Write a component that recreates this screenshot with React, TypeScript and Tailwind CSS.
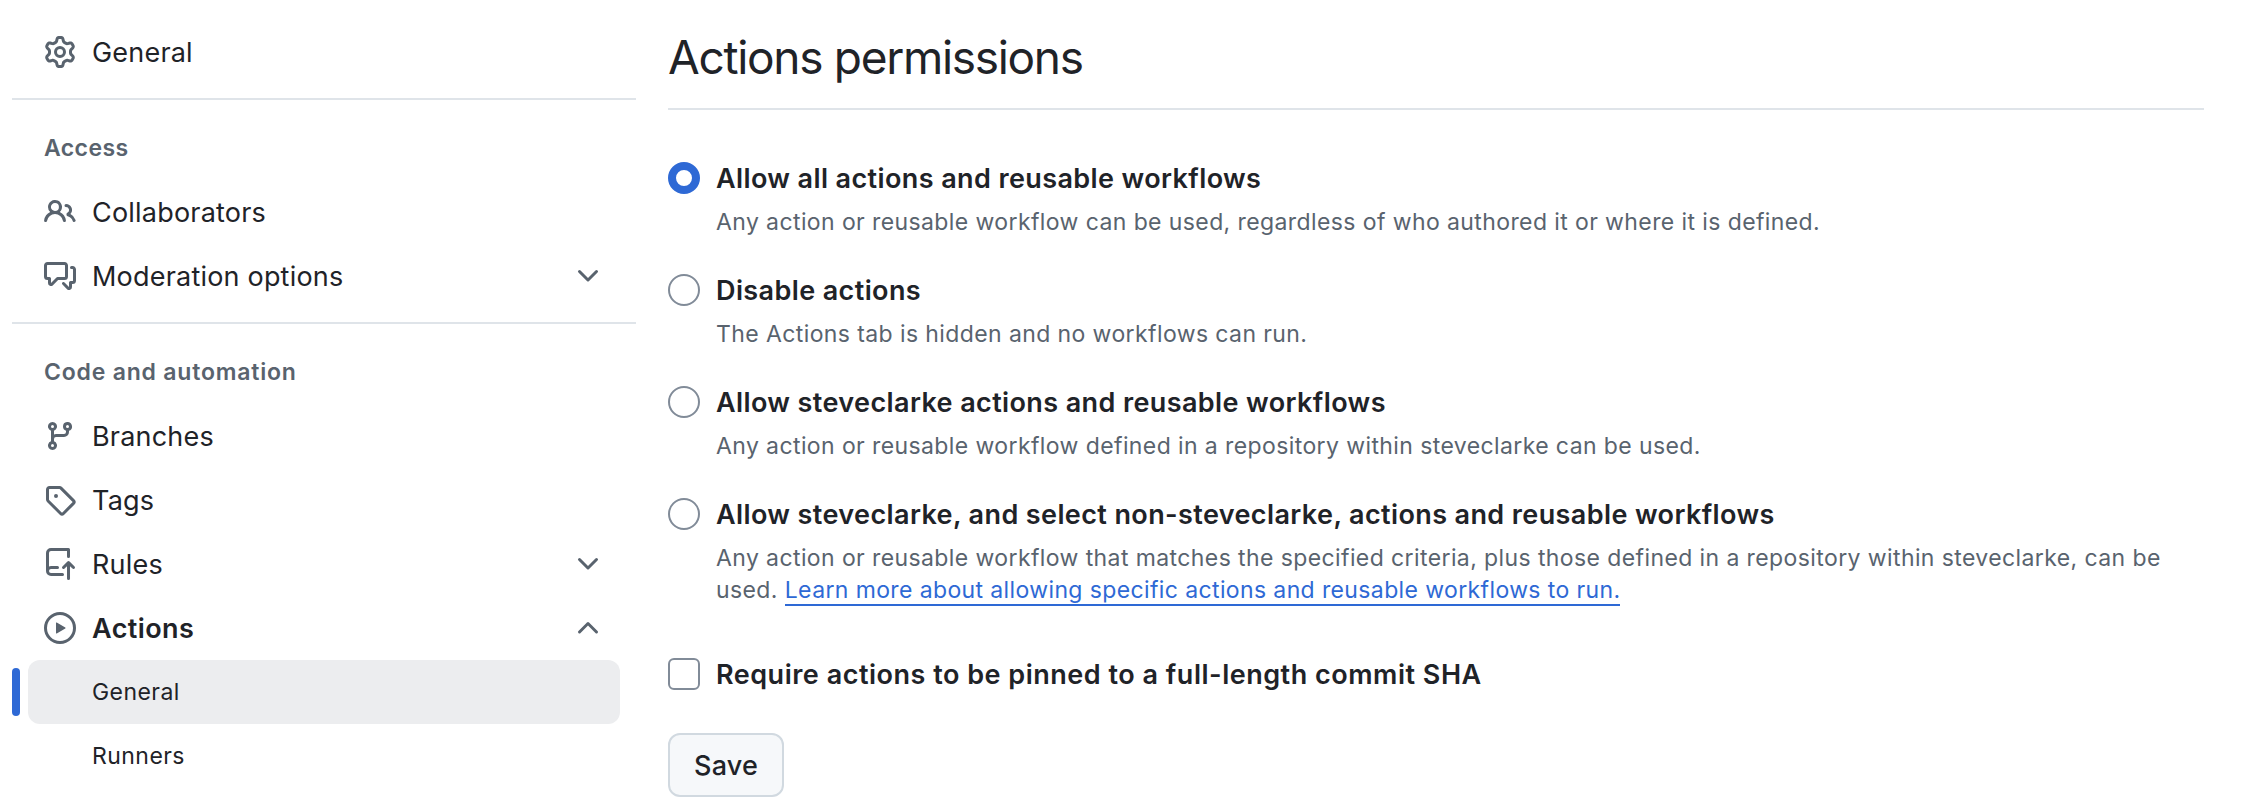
import { useState } from "react";

const icons = {
  gear: "M8 0a8.2 8.2 0 0 1 .701.031C9.444.095 9.99.645 10.16 1.29l.288 1.107c.018.066.079.158.212.224.231.114.454.243.668.386.123.082.233.09.299.071l1.103-.303c.644-.176 1.392.021 1.82.63.27.385.506.792.704 1.218.315.675.111 1.422-.364 1.891l-.814.806c-.049.048-.098.147-.088.294.016.257.016.515 0 .772-.01.147.038.246.088.294l.814.806c.475.469.679 1.216.364 1.891a7.977 7.977 0 0 1-.704 1.217c-.428.61-1.176.807-1.82.63l-1.102-.302c-.067-.019-.177-.011-.3.071a5.909 5.909 0 0 1-.668.386c-.133.066-.194.158-.211.224l-.29 1.106c-.168.646-.715 1.196-1.458 1.26a8.006 8.006 0 0 1-1.402 0c-.743-.064-1.289-.614-1.458-1.26l-.289-1.106c-.018-.066-.079-.158-.212-.224a5.738 5.738 0 0 1-.668-.386c-.123-.082-.233-.09-.299-.071l-1.103.303c-.644.176-1.392-.021-1.82-.63a8.12 8.12 0 0 1-.704-1.218c-.315-.675-.111-1.422.363-1.891l.815-.806c.05-.048.098-.147.088-.294a6.214 6.214 0 0 1 0-.772c.01-.147-.038-.246-.088-.294l-.815-.806C.635 6.045.431 5.298.746 4.623a7.92 7.92 0 0 1 .704-1.217c.428-.61 1.176-.807 1.82-.63l1.102.302c.067.019.177.011.3-.071.214-.143.437-.272.668-.386.133-.066.194-.158.211-.224l.29-1.106C6.009.645 6.556.095 7.299.03 7.53.01 7.764 0 8 0Zm-.571 1.525c-.036.003-.108.036-.137.146l-.289 1.105c-.147.561-.549.967-.998 1.189-.173.086-.34.183-.5.29-.417.278-.97.423-1.529.27l-1.103-.303c-.109-.03-.175.016-.195.045-.22.312-.412.644-.573.99-.014.031-.021.11.059.19l.815.806c.411.406.562.957.53 1.456a4.709 4.709 0 0 0 0 .582c.032.499-.119 1.05-.53 1.456l-.815.806c-.081.08-.073.159-.059.19.162.346.353.677.573.989.02.03.085.076.195.046l1.102-.303c.56-.153 1.113-.008 1.53.27.161.107.328.204.501.29.447.222.85.629.997 1.189l.289 1.105c.029.109.101.143.137.146a6.6 6.6 0 0 0 1.142 0c.036-.003.108-.036.137-.146l.289-1.105c.147-.561.549-.967.998-1.189.173-.086.34-.183.5-.29.417-.278.97-.423 1.529-.27l1.103.303c.109.029.175-.016.195-.045.22-.313.411-.644.573-.99.014-.031.021-.11-.059-.19l-.815-.806c-.411-.406-.562-.957-.53-1.456a4.709 4.709 0 0 0 0-.582c-.032-.499.119-1.05.53-1.456l.815-.806c.081-.08.073-.159.059-.19a6.464 6.464 0 0 0-.573-.989c-.02-.03-.085-.076-.195-.046l-1.102.303c-.56.153-1.113.008-1.53-.27a4.44 4.44 0 0 0-.501-.29c-.447-.222-.85-.629-.997-1.189l-.289-1.105c-.029-.11-.101-.143-.137-.146a6.6 6.6 0 0 0-1.142 0ZM11 8a3 3 0 1 1-6 0 3 3 0 0 1 6 0ZM9.5 8a1.5 1.5 0 1 0-3.001.001A1.5 1.5 0 0 0 9.5 8Z",
  people: "M2 5.5a3.5 3.5 0 1 1 5.898 2.549 5.508 5.508 0 0 1 3.034 4.084.75.75 0 1 1-1.482.235 4 4 0 0 0-7.9 0 .75.75 0 0 1-1.482-.236A5.507 5.507 0 0 1 3.102 8.05 3.493 3.493 0 0 1 2 5.5ZM11 4a3.001 3.001 0 0 1 2.22 5.018 5.01 5.01 0 0 1 2.56 3.012.749.749 0 0 1-.885.954.752.752 0 0 1-.549-.514 3.507 3.507 0 0 0-2.522-2.372.75.75 0 0 1-.574-.73v-.352a.75.75 0 0 1 .416-.672A1.5 1.5 0 0 0 11 5.5.75.75 0 0 1 11 4Zm-5.5-.5a2 2 0 1 0-.001 3.999A2 2 0 0 0 5.5 3.5Z",
  discussion: "M1.75 1h8.5c.966 0 1.75.784 1.75 1.75v5.5A1.75 1.75 0 0 1 10.25 10H7.061l-2.574 2.573A1.458 1.458 0 0 1 2 11.543V10h-.25A1.75 1.75 0 0 1 0 8.25v-5.5C0 1.784.784 1 1.75 1ZM1.5 2.75v5.5c0 .138.112.25.25.25h1a.75.75 0 0 1 .75.75v2.19l2.72-2.72a.749.749 0 0 1 .53-.22h3.5a.25.25 0 0 0 .25-.25v-5.5a.25.25 0 0 0-.25-.25h-8.5a.25.25 0 0 0-.25.25Zm13 2a.25.25 0 0 0-.25-.25h-.5a.75.75 0 0 1 0-1.5h.5c.966 0 1.75.784 1.75 1.75v5.5A1.75 1.75 0 0 1 14.25 12H14v1.543a1.458 1.458 0 0 1-2.487 1.03L9.22 12.28a.749.749 0 0 1 .326-1.275.749.749 0 0 1 .734.215l2.22 2.22v-2.19a.75.75 0 0 1 .75-.75h1a.25.25 0 0 0 .25-.25Z",
  branch: "M9.5 3.25a2.25 2.25 0 1 1 3 2.122V6A2.5 2.5 0 0 1 10 8.5H6a1 1 0 0 0-1 1v1.128a2.251 2.251 0 1 1-1.5 0V5.372a2.25 2.25 0 1 1 1.5 0v1.836A2.493 2.493 0 0 1 6 7h4a1 1 0 0 0 1-1v-.628A2.25 2.25 0 0 1 9.5 3.25Zm-6 0a.75.75 0 1 0 1.5 0 .75.75 0 0 0-1.5 0Zm8.25-.75a.75.75 0 1 0 0 1.5.75.75 0 0 0 0-1.5ZM4.25 12a.75.75 0 1 0 0 1.5.75.75 0 0 0 0-1.5Z",
  tag: "M1 7.775V2.75C1 1.784 1.784 1 2.75 1h5.025c.464 0 .91.184 1.238.513l6.25 6.25a1.75 1.75 0 0 1 0 2.474l-5.026 5.026a1.75 1.75 0 0 1-2.474 0l-6.25-6.25A1.752 1.752 0 0 1 1 7.775Zm1.5 0c0 .066.026.13.073.177l6.25 6.25a.25.25 0 0 0 .354 0l5.025-5.025a.25.25 0 0 0 0-.354l-6.25-6.25a.25.25 0 0 0-.177-.073H2.75a.25.25 0 0 0-.25.25ZM6 5a1 1 0 1 1 0 2 1 1 0 0 1 0-2Z",
  rules: "M1 2.5A2.5 2.5 0 0 1 3.5 0h8.75a.75.75 0 0 1 .75.75v3.5a.75.75 0 0 1-1.5 0V1.5h-8a1 1 0 0 0-1 1v6.708A2.493 2.493 0 0 1 3.5 9h3.25a.75.75 0 0 1 0 1.5H3.5a1 1 0 0 0 0 2h5.75a.75.75 0 0 1 0 1.5H3.5A2.5 2.5 0 0 1 1 11.5Zm13.23 7.79h-.001l-1.224-1.224v6.184a.75.75 0 0 1-1.5 0V9.066L10.28 10.29a.75.75 0 0 1-1.06-1.061l2.505-2.504a.75.75 0 0 1 1.06 0L15.29 9.23a.751.751 0 0 1-.018 1.042.751.751 0 0 1-1.042.018Z",
  play: "M8 0a8 8 0 1 1 0 16A8 8 0 0 1 8 0ZM1.5 8a6.5 6.5 0 1 0 13 0 6.5 6.5 0 0 0-13 0Zm4.879-2.773 4.264 2.559a.25.25 0 0 1 0 .428l-4.264 2.559A.25.25 0 0 1 6 10.559V5.442a.25.25 0 0 1 .379-.215Z",
  down: "M12.78 5.22a.749.749 0 0 1 0 1.06l-4.25 4.25a.749.749 0 0 1-1.06 0L3.22 6.28a.749.749 0 1 1 1.06-1.06L8 8.939l3.72-3.719a.749.749 0 0 1 1.06 0Z",
  up: "M3.22 10.53a.749.749 0 0 1 0-1.06l4.25-4.25a.749.749 0 0 1 1.06 0l4.25 4.25a.749.749 0 1 1-1.06 1.06L8 6.811 4.28 10.53a.749.749 0 0 1-1.06 0Z",
};

function Icon({ name }: { name: keyof typeof icons }) {
  return (
    <svg viewBox="0 0 16 16" className="size-8 shrink-0 fill-[#59636e]" aria-hidden="true">
      <path d={icons[name]} />
    </svg>
  );
}

interface NavRowProps {
  icon: keyof typeof icons;
  label: string;
  chevron?: "up" | "down";
  active?: boolean;
}

function NavRow({ icon, label, chevron, active }: NavRowProps) {
  return (
    <a href="#" className="mx-4 flex h-16 items-center gap-4 px-4">
      <Icon name={icon} />
      <span
        className={
          active
            ? "grow pt-px text-[27px] leading-[39px] font-semibold tracking-[0.4px]"
            : "grow pt-px text-[27px] leading-[39px] tracking-[0.2px]"
        }
      >
        {label}
      </span>
      {chevron && <Icon name={chevron} />}
    </a>
  );
}

function Divider() {
  return <hr className="mt-3.5 mb-4 border-t-2 border-[#dfe4e9]" />;
}

function Sidebar() {
  return (
    <nav className="flex w-[624px] shrink-0 flex-col whitespace-nowrap pt-5">
      <NavRow icon="gear" label="General" />
      <Divider />
      <h2 className="flex h-16 items-center px-8 text-[23px] font-semibold tracking-[0.4px] text-[#59636e]">Access</h2>
      <NavRow icon="people" label="Collaborators" />
      <NavRow icon="discussion" label="Moderation options" chevron="down" />
      <Divider />
      <h2 className="flex h-16 items-center px-8 text-[23px] font-semibold tracking-[0.8px] text-[#59636e]">
        Code and automation
      </h2>
      <NavRow icon="branch" label="Branches" />
      <NavRow icon="tag" label="Tags" />
      <NavRow icon="rules" label="Rules" chevron="down" />
      <NavRow icon="play" label="Actions" chevron="up" active />
      <div className="flex items-center gap-2 pr-4">
        <span className="h-12 w-2 rounded-full bg-[#2e69d5]" />
        <a href="#" className="flex h-16 grow items-center rounded-xl bg-[#ecedef] pl-16 text-[23px] tracking-[0.45px]">
          General
        </a>
      </div>
      <a href="#" className="flex h-16 items-center pl-20 text-[23px] tracking-[0.45px]">
        Runners
      </a>
    </nav>
  );
}

const options = [
  {
    title: "Allow all actions and reusable workflows",
    text: "Any action or reusable workflow can be used, regardless of who authored it or where it is defined.",
  },
  { title: "Disable actions", text: "The Actions tab is hidden and no workflows can run." },
  {
    title: "Allow steveclarke actions and reusable workflows",
    text: "Any action or reusable workflow defined in a repository within steveclarke can be used.",
  },
  {
    title: "Allow steveclarke, and select non-steveclarke, actions and reusable workflows",
    text: "Any action or reusable workflow that matches the specified criteria, plus those defined in a repository within steveclarke, can be used. ",
    link: "Learn more about allowing specific actions and reusable workflows to run.",
  },
];

export default function App() {
  const [selected, setSelected] = useState(0);
  return (
    <div className="flex h-[798px] gap-8 overflow-hidden bg-white pr-16 pl-3 font-['Inter',sans-serif] text-[#1f2328]">
      <Sidebar />
      <main className="flex min-w-0 grow flex-col">
        <h1 className="flex h-[110px] items-center border-b-2 border-[#dfe4e9] pt-1.5 text-[46px] leading-none tracking-[-1.3px]">
          Actions permissions
        </h1>
        <form className="flex flex-col items-start pt-[52px]">
          <div className="flex flex-col gap-9">
            {options.map((o, i) => (
              <label key={o.title} className="flex gap-4">
                <input
                  type="radio"
                  name="policy"
                  checked={selected === i}
                  onChange={() => setSelected(i)}
                  className="size-8 shrink-0 appearance-none rounded-full border-2 border-[#818b98] bg-white checked:border-8 checked:border-[#2e69d5]"
                />
                <span className="flex flex-col gap-[11px] pt-px">
                  <span className="text-[27px] leading-8 font-semibold tracking-[0.39px]">{o.title}</span>
                  <span className="text-[23px] leading-8 tracking-[0.4px] text-[#59636e]">
                    {o.text}
                    {o.link && (
                      <a href="#" className="border-b-2 border-[#2e69d5] tracking-[0.38px] text-[#2e69d5]">
                        {o.link}
                      </a>
                    )}
                  </span>
                </span>
              </label>
            ))}
          </div>
          <label className="mt-[52px] flex h-8 gap-4">
            <input type="checkbox" className="size-8 shrink-0 appearance-none rounded-md border-2 border-[#818b98] bg-white" />
            <span className="pt-px text-[27px] leading-8 font-semibold tracking-[0.51px]">
              Require actions to be pinned to a full-length commit SHA
            </span>
          </label>
          <button
            type="button"
            className="mt-[43px] flex h-16 w-[116px] items-center justify-center rounded-xl border-2 border-[#d1d9e0] bg-[#f6f8fa] pt-0.5 text-[27px] font-medium tracking-[0.2px]"
          >
            Save
          </button>
        </form>
      </main>
    </div>
  );
}
